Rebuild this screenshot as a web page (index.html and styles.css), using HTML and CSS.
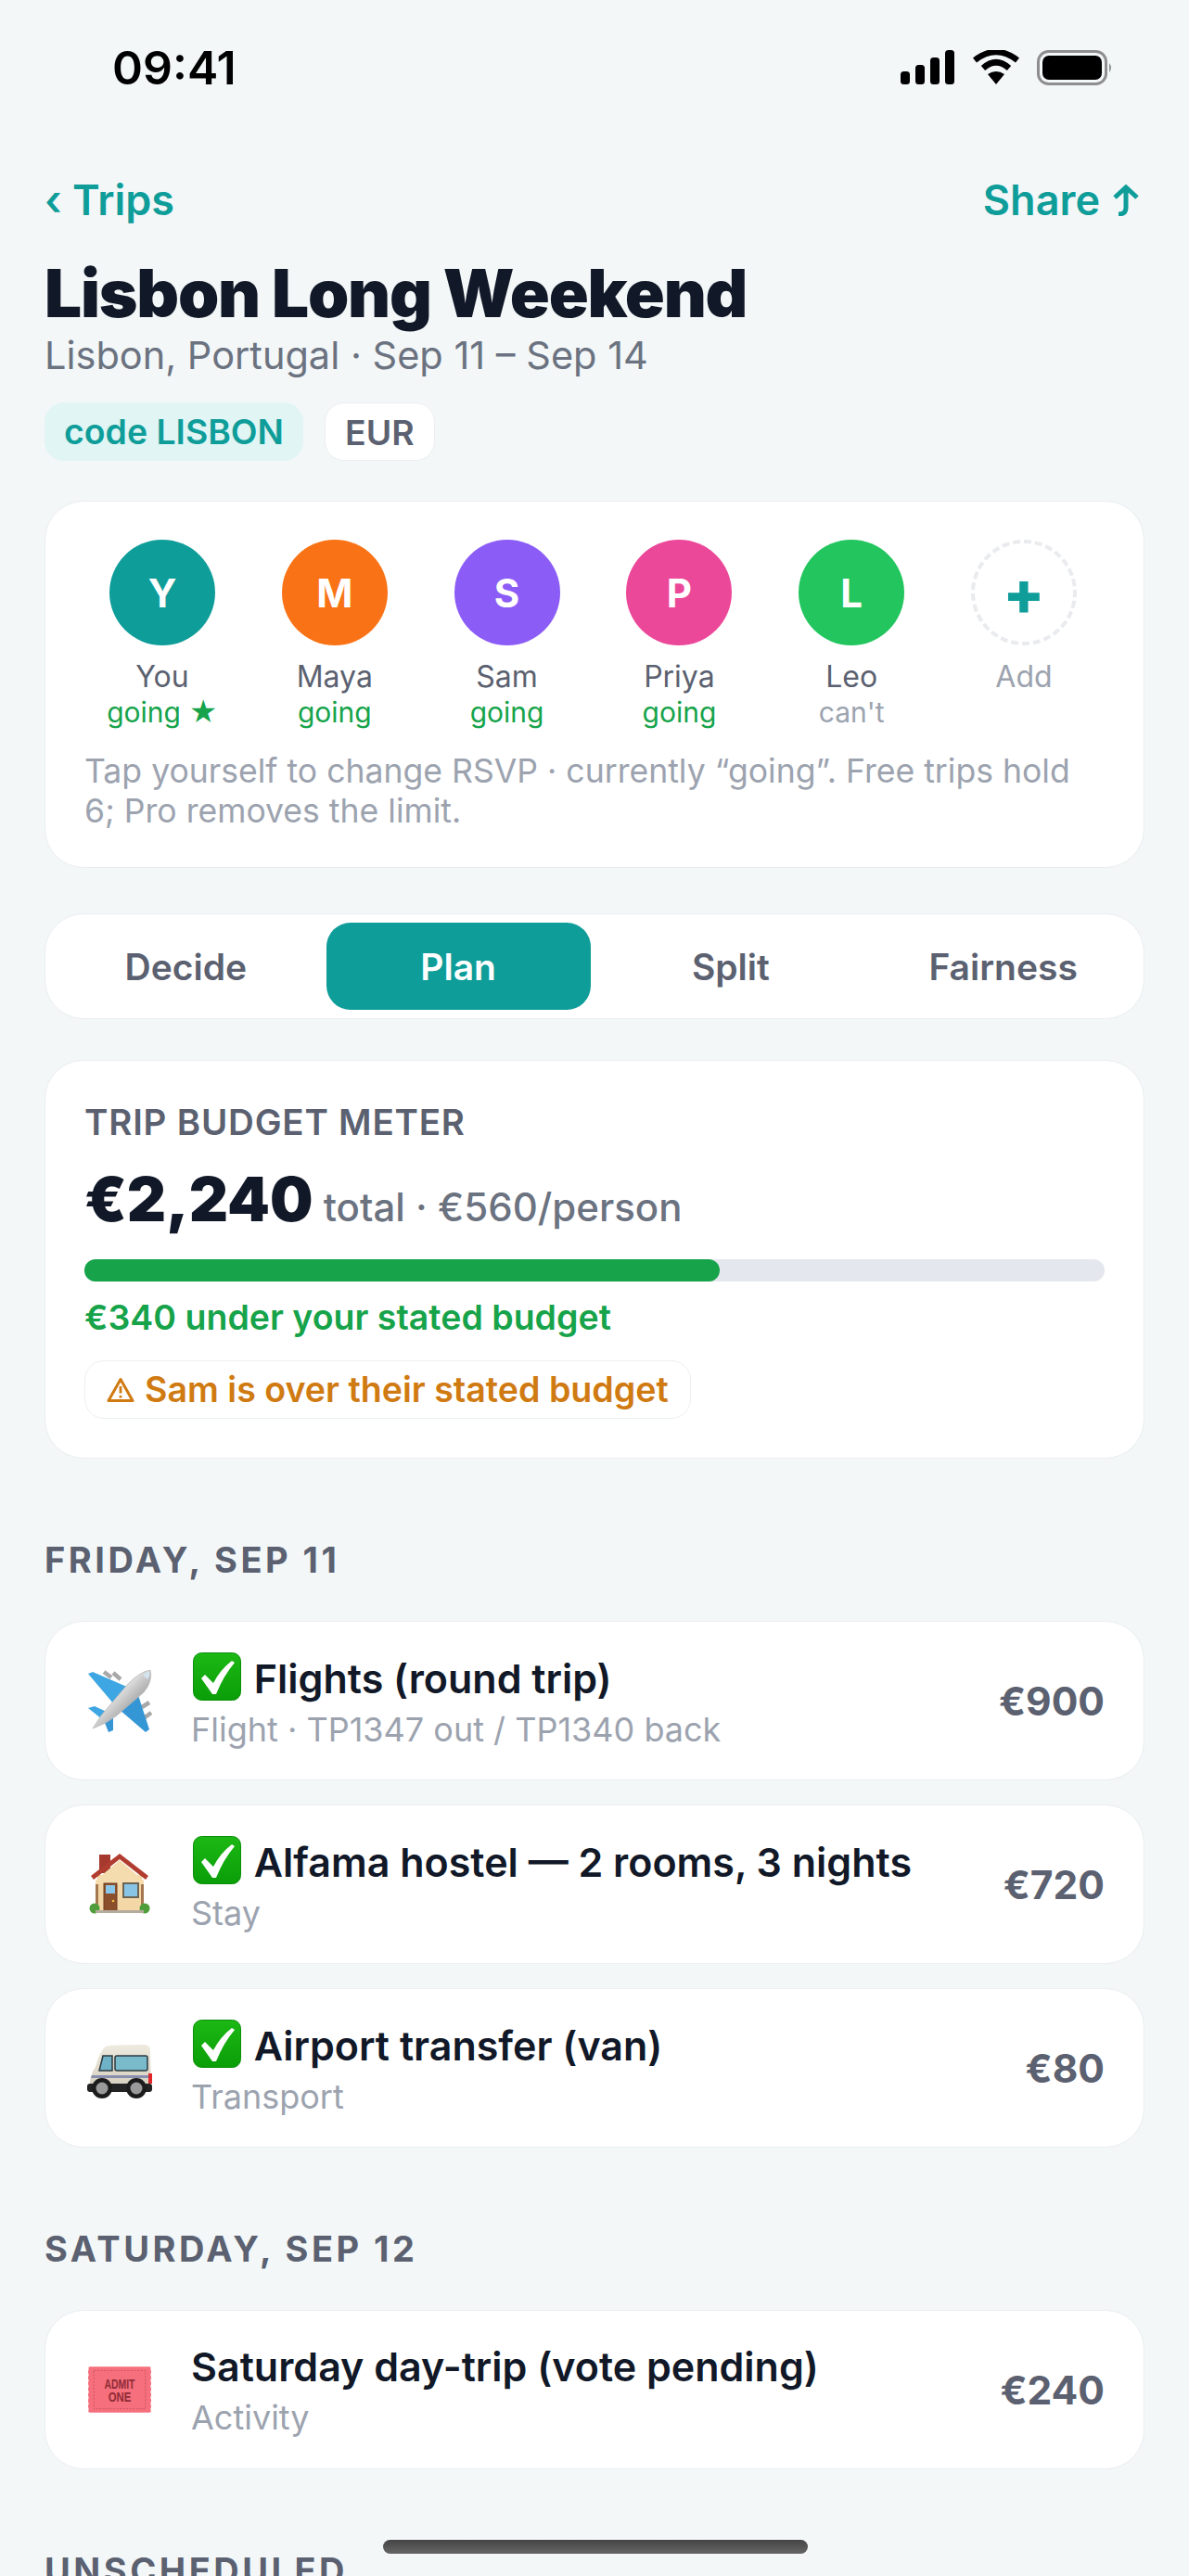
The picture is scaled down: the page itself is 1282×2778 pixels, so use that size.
FILE: index.html
```html
<!DOCTYPE html>
<html>
<head>
    <title>Lisbon Long Weekend</title>
    <link rel="stylesheet" href="styles.css">
</head>
<body>
    <svg class="defs">
        <defs>
            <linearGradient id="check-bg" x1="0" y1="0" x2="0" y2="1">
                <stop offset="0" stop-color="#1cb814"/>
                <stop offset="1" stop-color="#0a9e08"/>
            </linearGradient>
            <symbol id="check" viewBox="0 0 52 52">
                <rect x="0.5" y="0.5" width="51" height="51" rx="9" fill="url(#check-bg)" stroke="#0b8f0a"/>
                <path d="M9 28 L13 24 L22 33 Q30 18 42 9 L45 11 Q33 25 25 45 L21 45 Z" fill="#fff"/>
            </symbol>
        </defs>
    </svg>

    <div class="status">
        <span class="time">09:41</span>
        <div class="status-icons">
            <svg width="58" height="38" viewBox="0 0 58 38">
                <rect x="0" y="23" width="10" height="14" rx="3.500" fill="#000"/>
                <rect x="16" y="16" width="10" height="21" rx="3.500" fill="#000"/>
                <rect x="32" y="8" width="10" height="29" rx="3.500" fill="#000"/>
                <rect x="48" y="0" width="10" height="37" rx="3.500" fill="#000"/>
            </svg>
            <svg width="50" height="38" viewBox="0 0 50 38">
                <path d="M2 11 Q25 -7 48 11" fill="none" stroke="#000" stroke-width="6.500"/>
                <path d="M11 19.500 Q25 7 39 19.500" fill="none" stroke="#000" stroke-width="6.500"/>
                <path d="M16 26 Q25 20 34 26 L25 37 Z" fill="#000"/>
            </svg>
            <svg width="82" height="38" viewBox="0 0 82 38">
                <rect x="1.500" y="1.500" width="73" height="35" rx="11" fill="none" stroke="#8e8e8e" stroke-width="3"/>
                <rect x="6" y="6" width="64" height="26" rx="7" fill="#000"/>
                <path d="M78 14 Q82 19 78 24 Z" fill="#8e8e8e"/>
            </svg>
        </div>
    </div>

    <div class="page">
        <div class="nav">
            <span>‹ Trips</span>
            <span class="share">Share
                <svg width="32" height="34" viewBox="0 0 32 34">
                    <path d="M4 14 L16 3 L28 14 M16 3 V25 Q16 32 8 32" fill="none" stroke="#0f9d9a" stroke-width="5"/>
                </svg>
            </span>
        </div>
        <h1 class="title">Lisbon Long Weekend</h1>
        <div class="subtitle">Lisbon, Portugal · Sep 11 – Sep 14</div>
        <div class="chips">
            <span class="chip chip-code">code LISBON</span>
            <span class="chip chip-cur">EUR</span>
        </div>

        <div class="card people-card">
            <div class="people">
                <div class="person">
                    <div class="avatar teal">Y</div>
                    <div class="name">You</div>
                    <div class="rsvp going">going ★</div>
                </div>
                <div class="person">
                    <div class="avatar orange">M</div>
                    <div class="name">Maya</div>
                    <div class="rsvp going">going</div>
                </div>
                <div class="person">
                    <div class="avatar purple">S</div>
                    <div class="name">Sam</div>
                    <div class="rsvp going">going</div>
                </div>
                <div class="person">
                    <div class="avatar pink">P</div>
                    <div class="name">Priya</div>
                    <div class="rsvp going">going</div>
                </div>
                <div class="person">
                    <div class="avatar green">L</div>
                    <div class="name">Leo</div>
                    <div class="rsvp cant">can't</div>
                </div>
                <div class="person">
                    <div class="avatar add">+</div>
                    <div class="name muted">Add</div>
                </div>
            </div>
            <p class="hint">Tap yourself to change RSVP · currently “going”. Free trips hold 6; Pro removes the limit.</p>
        </div>

        <div class="card tabs">
            <div class="tab">Decide</div>
            <div class="tab active">Plan</div>
            <div class="tab">Split</div>
            <div class="tab">Fairness</div>
        </div>

        <div class="card budget">
            <div class="budget-label">TRIP BUDGET METER</div>
            <div class="budget-total"><span class="amount">€2,240</span> total · €560/person</div>
            <div class="meter"><div class="meter-fill" style="width: 62.300%"></div></div>
            <div class="under">€340 under your stated budget</div>
            <div class="warn">
                <svg width="30" height="30" viewBox="0 0 30 30">
                    <path d="M15 3.500 L28 26.500 H2 Z" fill="none" stroke="#d07a12" stroke-width="3" stroke-linejoin="round"/>
                    <path d="M15 11 V18.500 M15 21 V23.500" stroke="#d07a12" stroke-width="2.800"/>
                </svg>
                <span>Sam is over their stated budget</span>
            </div>
        </div>

        <div class="day">FRIDAY, SEP 11</div>
        <div class="card item">
            <svg class="item-icon" viewBox="0 0 68 68">
                <defs>
                    <linearGradient id="fuselage" x1="0.300" y1="0.300" x2="0.700" y2="0.700">
                        <stop offset="0" stop-color="#fafafa"/>
                        <stop offset="1" stop-color="#9e9e9e"/>
                    </linearGradient>
                </defs>
                <!-- engines -->
                <path d="M17 3 L25 9 M27 4 L35 11 M58 41 L66 36 M60 53 L68 47" stroke="#a8a8a8" stroke-width="4.500"/>
                <!-- wings and tail -->
                <path d="M0 5 L5 3 L44 20 L28 38 Z" fill="#3ea6e2"/>
                <path d="M53 25 L66 65 L62 68 L34 44 Z" fill="#3596d6"/>
                <path d="M0 42 L7 40 L22 47 L15 54 Z" fill="#3ea6e2"/>
                <path d="M16 53 L27 51 L27 66 L22 68 Z" fill="#3596d6"/>
                <!-- fuselage -->
                <path d="M5 64 L14 50 L42 17 Q55 3 67 1 Q70 13 60 25 L31 50 L19 58 Z" fill="url(#fuselage)" stroke="#b5b5b5" stroke-width="0.700"/>
                <path d="M59 6 Q63 3 66 2 Q67 7 64 11 Z" fill="#d3e4ee"/>
            </svg>
            <div class="item-text">
                <div class="item-title"><svg class="check"><use href="#check"/></svg> Flights (round trip)</div>
                <div class="item-sub">Flight · TP1347 out / TP1340 back</div>
            </div>
            <div class="price">€900</div>
        </div>
        <div class="card item">
            <svg class="item-icon" viewBox="0 0 68 68">
                <rect x="10" y="24" width="48" height="39" fill="#f3d7a6"/>
                <rect x="8" y="33" width="3" height="26" fill="#a4774f"/>
                <rect x="57" y="33" width="3" height="26" fill="#a4774f"/>
                <rect x="12" y="2" width="12" height="20" fill="#a5392e"/>
                <path d="M8 30 L34 8 L60 30 V34 H8 Z" fill="#f5dcae"/>
                <path d="M3 25 L34 1 L65 25 L62 29 L34 7 L6 29 Z" fill="#b13c30"/>
                <rect x="17" y="33" width="14" height="30" fill="#8b4f2c" stroke="#6e3b20"/>
                <rect x="19" y="35" width="10" height="9" fill="#8ac6e8"/>
                <circle cx="27" cy="52" r="1.300" fill="#f0c040"/>
                <rect x="38" y="33" width="16" height="15" fill="#88c4e6" stroke="#6d6355" stroke-width="2"/>
                <circle cx="7" cy="60" r="5.500" fill="#4f9e3b"/>
                <circle cx="61" cy="60" r="5.500" fill="#4f9e3b"/>
                <rect x="8" y="62" width="52" height="3" fill="#b5ab9c"/>
            </svg>
            <div class="item-text">
                <div class="item-title"><svg class="check"><use href="#check"/></svg> Alfama hostel — 2 rooms, 3 nights</div>
                <div class="item-sub">Stay</div>
            </div>
            <div class="price">€720</div>
        </div>
        <div class="card item">
            <svg class="item-icon van-icon" viewBox="0 0 70 58">
                <defs>
                    <linearGradient id="van-body" x1="0" y1="0" x2="0" y2="1">
                        <stop offset="0" stop-color="#eeeade"/>
                        <stop offset="1" stop-color="#d5d0bf"/>
                    </linearGradient>
                </defs>
                <path d="M3 46 Q2 34 9 24 Q14 6 20 2 Q22 0 62 0 Q67 0 68 6 L69 46 Z" fill="url(#van-body)"/>
                <path d="M17 12 H27 V28 H13 Z" fill="#6fb2c8" stroke="#2d3a40" stroke-width="1.500"/>
                <rect x="30" y="12" width="35" height="16" rx="2" fill="#79bacb" stroke="#2d3a40" stroke-width="1.500"/>
                <path d="M5 33 H68 V36 H4 Z" fill="#8a8fb0"/>
                <rect x="66" y="31" width="4" height="11" fill="#e0262a"/>
                <rect x="0" y="42" width="70" height="9" rx="3" fill="#232323"/>
                <circle cx="16" cy="47" r="11" fill="#1c1c1c"/>
                <circle cx="16" cy="47" r="6.500" fill="#9a9a9a"/>
                <circle cx="53" cy="47" r="11" fill="#1c1c1c"/>
                <circle cx="53" cy="47" r="6.500" fill="#9a9a9a"/>
            </svg>
            <div class="item-text">
                <div class="item-title"><svg class="check"><use href="#check"/></svg> Airport transfer (van)</div>
                <div class="item-sub">Transport</div>
            </div>
            <div class="price">€80</div>
        </div>

        <div class="day">SATURDAY, SEP 12</div>
        <div class="card item">
            <svg class="item-icon ticket-icon" viewBox="0 0 68 48">
                <rect x="1" y="0" width="66" height="48" rx="2" fill="#f56f7c"/>
                <path d="M0.500 1 V48 M67.500 1 V48" stroke="#fff" stroke-width="2" stroke-dasharray="3 3"/>
                <rect x="7" y="4" width="54" height="40" fill="none" stroke="#d04f5b" stroke-width="0.800" stroke-dasharray="2 1.500"/>
                <text x="34" y="23" class="ticket-text" textLength="32" lengthAdjust="spacingAndGlyphs">ADMIT</text>
                <text x="34" y="37" class="ticket-text" textLength="24" lengthAdjust="spacingAndGlyphs">ONE</text>
            </svg>
            <div class="item-text">
                <div class="item-title">Saturday day-trip (vote pending)</div>
                <div class="item-sub">Activity</div>
            </div>
            <div class="price">€240</div>
        </div>

        <div class="day">UNSCHEDULED</div>
    </div>

    <div class="home-bar"></div>
</body>
</html>
```

FILE: styles.css
```css
html, body {
    margin: 0;
    padding: 0;
}
body {
    position: relative;
    width: 1282px;
    height: 2778px;
    overflow: hidden;
    background: #f3f7f8;
    font-family: Inter, "Noto Sans", sans-serif;
    color: #111827;
}
.defs {
    position: absolute;
    width: 0;
    height: 0;
}

/* status bar */
.status {
    height: 186px;
    padding: 46px 82px 0 121px;
    box-sizing: border-box;
    display: flex;
    justify-content: space-between;
    align-items: flex-start;
}
.time {
    font-size: 50px;
    font-weight: 600;
    line-height: 54px;
    color: #000;
}
.status-icons {
    display: flex;
    gap: 19.500px;
    padding-top: 8px;
}

.page {
    padding: 0 48px;
}
.nav {
    display: flex;
    justify-content: space-between;
    font-size: 45px;
    line-height: 60px;
    font-weight: 600;
    color: #0f9d9a;
}
.share {
    display: flex;
    align-items: center;
    gap: 12px;
    padding-right: 4px;
}
.title {
    margin: 30px 0 0;
    font-size: 71px;
    line-height: 80px;
    font-weight: 900;
    letter-spacing: -1.200px;
}
.subtitle {
    margin-top: 2px;
    font-size: 41.500px;
    line-height: 50px;
    color: #6b7280;
}
.chips {
    display: flex;
    gap: 23px;
    margin-top: 26px;
}
.chip {
    height: 63px;
    box-sizing: border-box;
    padding: 0 21px;
    border-radius: 21px;
    font-size: 37.400px;
    font-weight: 600;
    line-height: 63px;
}
.chip-code {
    background: #e0f5f4;
    color: #0f9d9a;
}
.chip-cur {
    background: #fff;
    border: 1px solid #eceff2;
    color: #5b6170;
}

.card {
    background: #fff;
    border: 1px solid #e9eef0;
    border-radius: 42px;
    box-sizing: border-box;
}

/* people */
.people-card {
    margin-top: 43px;
    height: 396px;
    padding: 41px 42px 0;
}
.people {
    display: flex;
    gap: 17.800px;
}
.person {
    width: 168px;
    flex: none;
    display: flex;
    flex-direction: column;
    align-items: center;
    white-space: nowrap;
}
.avatar {
    width: 114px;
    height: 114px;
    border-radius: 50%;
    box-sizing: border-box;
    display: flex;
    align-items: center;
    justify-content: center;
    color: #fff;
    font-size: 42px;
    font-weight: 700;
}
.teal { background: #0f9d9a; }
.orange { background: #f97316; }
.purple { background: #8b5cf6; }
.pink { background: #ec4899; }
.green { background: #22c55e; }
.add {
    border: 4px dashed #e9ebee;
    color: #0f9d9a;
    font-size: 66px;
    font-weight: 800;
}
.name {
    margin-top: 11.500px;
    font-size: 32px;
    line-height: 44px;
    color: #5b6170;
}
.muted {
    color: #9ca3af;
}
.rsvp {
    font-size: 30px;
    line-height: 33px;
}
.going {
    color: #16a34a;
}
.cant {
    color: #9ca3af;
}
.hint {
    margin: 25.500px 0 0;
    font-size: 35.600px;
    line-height: 43px;
    color: #9ca3af;
}

/* tabs */
.tabs {
    margin-top: 49px;
    height: 114px;
    padding: 9px;
    display: grid;
    grid-template-columns: repeat(4, 1fr);
    gap: 9px;
}
.tab {
    display: flex;
    align-items: center;
    justify-content: center;
    border-radius: 26px;
    font-size: 39px;
    font-weight: 600;
    color: #5b6170;
}
.tab.active {
    background: #0f9d9a;
    color: #fff;
}

/* budget */
.budget {
    margin-top: 44px;
    height: 430px;
    padding: 42px 42px 0;
}
.budget-label {
    font-size: 38.500px;
    line-height: 48px;
    font-weight: 600;
    letter-spacing: 0.800px;
    color: #5b6170;
}
.budget-total {
    margin-top: 18px;
    font-size: 42px;
    line-height: 84px;
    font-weight: 500;
    color: #6b7280;
}
.amount {
    font-size: 65.500px;
    font-weight: 900;
    color: #111827;
}
.meter {
    margin-top: 14px;
    height: 24px;
    border-radius: 12px;
    background: #e5e7ef;
}
.meter-fill {
    height: 100%;
    border-radius: 12px;
    background: #16a34a;
}
.under {
    margin-top: 15px;
    font-size: 37.500px;
    line-height: 48px;
    font-weight: 600;
    color: #16a34a;
}
.warn {
    display: inline-flex;
    align-items: center;
    gap: 11px;
    margin-top: 22px;
    height: 63px;
    box-sizing: border-box;
    padding: 0 23px;
    border: 1px solid #eceff2;
    border-radius: 21px;
    font-size: 37.600px;
    font-weight: 600;
    color: #d07a12;
}

/* day sections */
.day {
    margin-top: 87px;
    margin-bottom: 44px;
    font-size: 38px;
    line-height: 44px;
    font-weight: 700;
    letter-spacing: 3.500px;
    color: #5b6170;
}
.item {
    height: 172px;
    margin-bottom: 26px;
    padding: 0 42px;
    display: flex;
    align-items: center;
}
.item-icon {
    width: 70px;
    height: 68px;
    flex: none;
    margin-left: 3px;
    margin-right: 42px;
}
.van-icon {
    margin-top: 8px;
}
.item-text {
    flex: 1;
    min-width: 0;
    padding-top: 3px;
}
.item-title {
    font-size: 43px;
    line-height: 54px;
    font-weight: 600;
    white-space: nowrap;
}
.check {
    width: 52px;
    height: 52px;
    margin-left: 2px;
    margin-right: 3px;
    vertical-align: -8px;
}
.item-sub {
    margin-top: 3px;
    font-size: 36px;
    line-height: 50px;
    color: #9ca3af;
}
.price {
    font-size: 42.500px;
    font-weight: 700;
    color: #5b6170;
}
.ticket-text {
    font-family: "Liberation Sans", sans-serif;
    font-size: 15px;
    font-weight: 700;
    fill: #8f2b36;
    text-anchor: middle;
}

.home-bar {
    position: absolute;
    left: 413px;
    top: 2739px;
    width: 458px;
    height: 15px;
    border-radius: 8px;
    background: linear-gradient(#444, #666);
}
```
